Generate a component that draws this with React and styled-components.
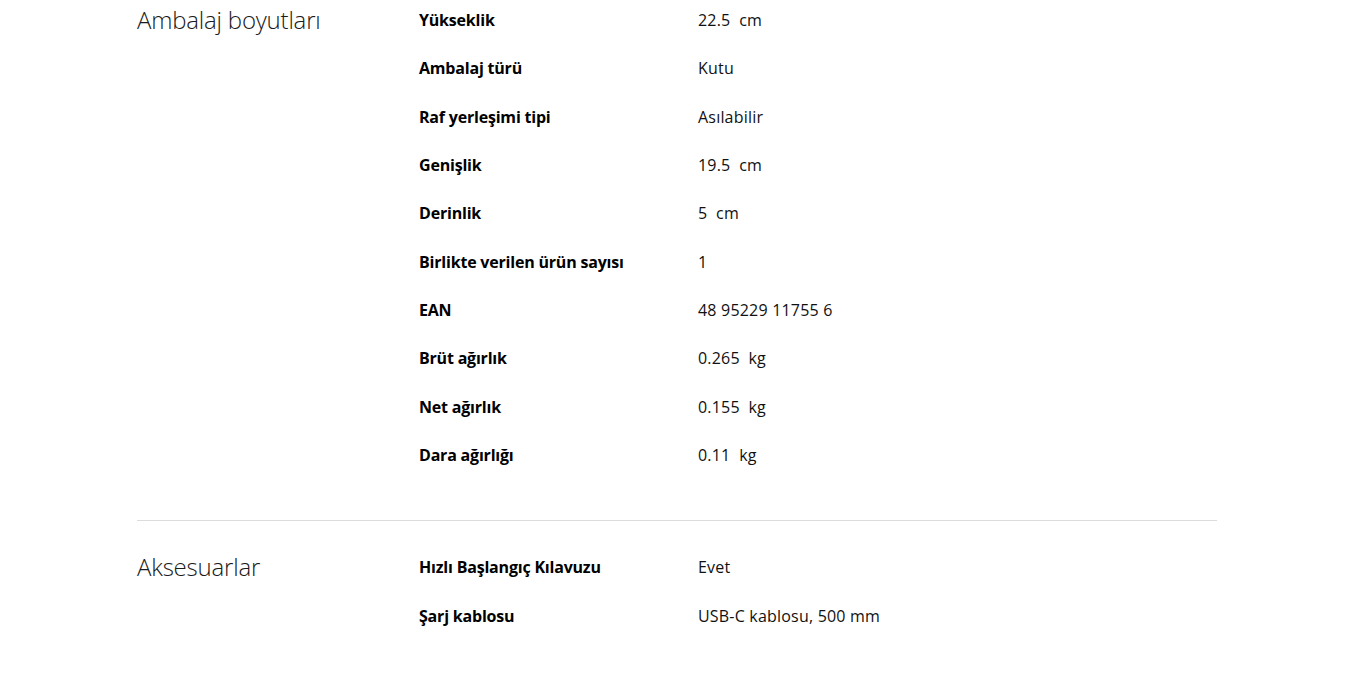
import React from 'react';
import styled, { createGlobalStyle } from 'styled-components';

const GlobalStyle = createGlobalStyle`
    html, body {
        margin: 0;
        padding: 0;
        background: #fff;
    }
    body {
        font-family: "Open Sans", "Noto Sans", sans-serif;
        color: #000;
    }
`;

const specs = [
    {
        title: "Ambalaj boyutları",
        rows: [
            ["Yükseklik", "22.5  cm"],
            ["Ambalaj türü", "Kutu"],
            ["Raf yerleşimi tipi", "Asılabilir"],
            ["Genişlik", "19.5  cm"],
            ["Derinlik", "5  cm"],
            ["Birlikte verilen ürün sayısı", "1"],
            ["EAN", "48 95229 11755 6"],
            ["Brüt ağırlık", "0.265  kg"],
            ["Net ağırlık", "0.155  kg"],
            ["Dara ağırlığı", "0.11  kg"],
        ],
    },
    {
        title: "Aksesuarlar",
        rows: [
            ["Hızlı Başlangıç Kılavuzu", "Evet"],
            ["Şarj kablosu", "USB-C kablosu, 500 mm"],
        ],
    },
];

export default function App() {
    return (
        <>
            <GlobalStyle />
            <Page>
                {specs.map((group, i) => (
                    <Section key={group.title} $first={i === 0}>
                        <Heading>{group.title}</Heading>
                        <List>
                            {group.rows.map(([label, value]) => (
                                <Row key={label}>
                                    <Label>{label}</Label>
                                    <Value>{value}</Value>
                                </Row>
                            ))}
                        </List>
                    </Section>
                ))}
            </Page>
        </>
    );
}

const Page = styled.div`
    width: 1080px;
    margin-left: 137px;
`;

const Section = styled.section`
    display: grid;
    grid-template-columns: 282px 1fr;
    padding: ${p => (p.$first ? "8px 0 53px" : "34px 0 40px")};
    border-top: ${p => (p.$first ? "none" : "1px solid #dcdcdc")};
`;

const Heading = styled.h2`
    margin: 0;
    font-size: 24px;
    font-weight: 300;
    line-height: 24px;
    letter-spacing: -0.2px;
    color: #1a1a1a;
`;

const List = styled.dl`
    margin: 0;
    display: flex;
    flex-direction: column;
    gap: 24px;
`;

const Row = styled.div`
    display: grid;
    grid-template-columns: 279px 1fr;
    line-height: 24.33px;
    font-size: 16px;
`;

const Label = styled.dt`
    font-weight: 700;
    letter-spacing: -0.2px;
`;

const Value = styled.dd`
    margin: 0;
    white-space: pre;
    letter-spacing: 0.2px;
    color: #111;
`;
